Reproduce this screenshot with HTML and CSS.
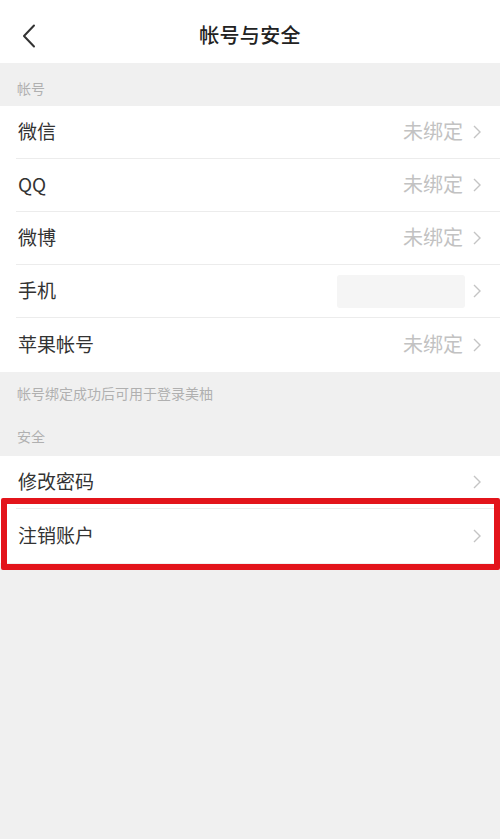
FILE: index.html
```html
<!DOCTYPE html>
<html lang="zh-CN">
<head>
<meta charset="utf-8">
<title>帐号与安全</title>
<link rel="stylesheet" href="styles.css">
</head>
<body>
<header class="topbar">
  <svg class="back" width="16" height="24" viewBox="0 0 16 24"><polyline points="13,1.5 3,12 13,22.5" fill="none" stroke="#333" stroke-width="2" stroke-linecap="round" stroke-linejoin="round"/></svg>
  <h1 class="title">帐号与安全</h1>
</header>

<div class="section-label">帐号</div>
<div class="group">
  <div class="row"><span class="label">微信</span><span class="value">未绑定</span><svg class="chev" width="10" height="16" viewBox="0 0 10 16"><polyline points="2,2 8,8 2,14" fill="none" stroke="#c4c4c4" stroke-width="1.4"/></svg></div>
  <div class="row"><span class="label">QQ</span><span class="value">未绑定</span><svg class="chev" width="10" height="16" viewBox="0 0 10 16"><polyline points="2,2 8,8 2,14" fill="none" stroke="#c4c4c4" stroke-width="1.4"/></svg></div>
  <div class="row"><span class="label">微博</span><span class="value">未绑定</span><svg class="chev" width="10" height="16" viewBox="0 0 10 16"><polyline points="2,2 8,8 2,14" fill="none" stroke="#c4c4c4" stroke-width="1.4"/></svg></div>
  <div class="row"><span class="label">手机</span><span class="blurred"></span><svg class="chev" width="10" height="16" viewBox="0 0 10 16"><polyline points="2,2 8,8 2,14" fill="none" stroke="#c4c4c4" stroke-width="1.4"/></svg></div>
  <div class="row"><span class="label">苹果帐号</span><span class="value">未绑定</span><svg class="chev" width="10" height="16" viewBox="0 0 10 16"><polyline points="2,2 8,8 2,14" fill="none" stroke="#c4c4c4" stroke-width="1.4"/></svg></div>
</div>
<div class="note">帐号绑定成功后可用于登录美柚</div>
<div class="section-label second">安全</div>
<div class="group">
  <div class="row"><span class="label">修改密码</span><svg class="chev" width="10" height="16" viewBox="0 0 10 16"><polyline points="2,2 8,8 2,14" fill="none" stroke="#c4c4c4" stroke-width="1.4"/></svg></div>
  <div class="row highlighted"><span class="label">注销账户</span><svg class="chev" width="10" height="16" viewBox="0 0 10 16"><polyline points="2,2 8,8 2,14" fill="none" stroke="#c4c4c4" stroke-width="1.4"/></svg><span class="mark"></span></div>
</div>
</body>
</html>
```

FILE: styles.css
```css
* { box-sizing: border-box; }
html, body {
  margin: 0;
  padding: 0;
  background: #f0f0f0;
  font-family: "Noto Sans CJK SC", "Noto Sans", sans-serif;
  color: #333;
}
body { min-height: 839px; }

.topbar {
  height: 63px;
  background: #fff;
  display: flex;
  align-items: center;
  justify-content: center;
  position: relative;
  padding-top: 6px;
}
.back {
  position: absolute;
  left: 21px;
  top: 24px;
}
.title {
  margin: 0;
  font-size: 20px;
  line-height: 24px;
  font-weight: 500;
  color: #222;
  letter-spacing: 0.3px;
}

.section-label {
  height: 43px;
  padding: 14px 0 0 17px;
  font-size: 14px;
  line-height: 22px;
  color: #b0b0b0;
}
.section-label.second {
  height: 41px;
  padding-top: 10px;
}
.note {
  height: 43px;
  padding: 10px 0 0 17px;
  font-size: 14px;
  line-height: 22px;
  color: #b0b0b0;
}

.group { background: #fff; }
.row {
  position: relative;
  margin-left: 16px;
  padding: 0 18px 0 2px;
  height: 53px;
  display: flex;
  align-items: center;
  border-bottom: 1px solid #ececec;
}
.row:last-child { border-bottom: none; height: 54px; }
.label {
  font-size: 19px;
  line-height: 20px;
  color: #333;
  flex: 1;
  margin-top: -3px;
}
.value {
  font-size: 20px;
  line-height: 20px;
  color: #c2c2c2;
  margin-right: 9px;
  margin-top: -3px;
}
.blurred {
  width: 128px;
  height: 33px;
  background: #f5f5f5;
  border-radius: 3px;
  margin-right: 7px;
}
.chev { display: block; }

.mark {
  position: absolute;
  left: -15px;
  right: 0;
  top: -11px;
  bottom: -7px;
  border: 6px solid #e3141b;
  border-radius: 2px;
  pointer-events: none;
}
```
